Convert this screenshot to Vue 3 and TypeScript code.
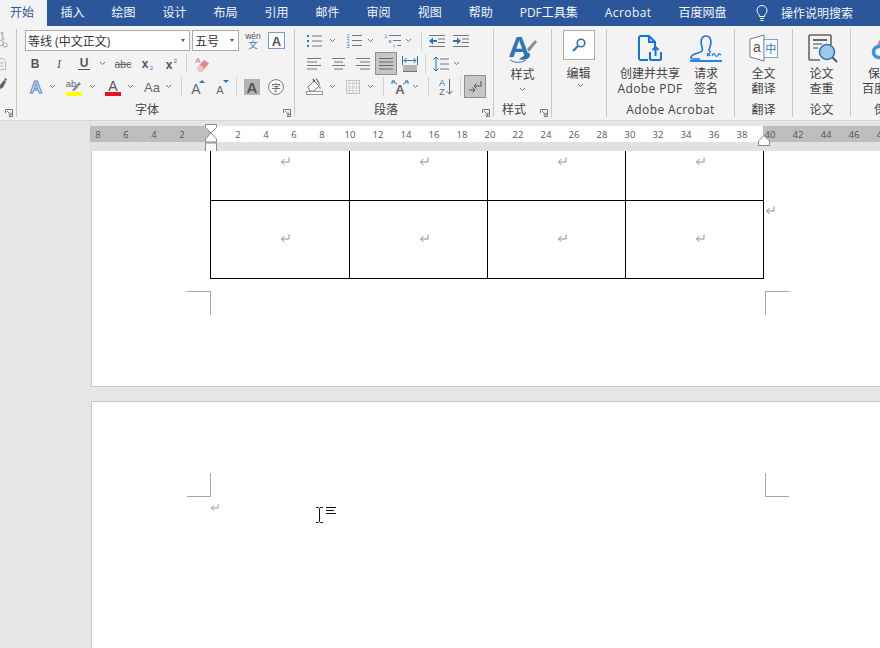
<script setup lang="ts">
const tabs = ['插入', '绘图', '设计', '布局', '引用', '邮件', '审阅', '视图', '帮助', 'PDF工具集', 'Acrobat', '百度网盘'];
const leftNums = [8, 6, 4, 2];
const midNums = Array.from({ length: 19 }, (_, i) => (i + 1) * 2);
const rightNums = [40, 42, 44, 46, 48];
</script>

<template>
  <div class="word">
    <nav class="tabs">
      <span class="tab active">开始</span>
      <span v-for="t in tabs" :key="t" class="tab" :class="{ latin: t === 'Acrobat' }">{{ t }}</span>
      <svg class="bulb" width="14" height="16" viewBox="0 0 14 16" fill="none" stroke="#fff" stroke-width="1">
        <path d="M4.5 11.5C4.5 9 2 8.500 2 5.500a5 5 0 0 1 10 0c0 3-2.500 3.500-2.500 6z" />
        <path d="M5 13.500h4M5.500 15.500h3" />
      </svg>
      <span class="search-tab">操作说明搜索</span>
    </nav>

    <section class="ribbon">
      <div class="group clip">
        <div class="clip-icons">
          <svg class="ic" width="7" height="16" viewBox="0 0 7 16" fill="none" stroke="#b5b5b5" stroke-width="1.200">
            <path d="M3 0l-1 8M1 0l3 8" /><circle cx="1" cy="11" r="2.500" /><circle cx="5" cy="13" r="2" />
          </svg>
          <svg class="ic" width="7" height="12" viewBox="0 0 7 12" fill="none" stroke="#bdbdbd">
            <path d="M0 .5h3l2.500 3v8H0" /><path d="M0 5h3.500M0 8h3.500" />
          </svg>
          <svg class="ic" width="7" height="11" viewBox="0 0 7 11" fill="#666">
            <path d="M0 7l4-5 2 1.500-3 6-3 1.500z" /><path d="M4 1l1.500-1L7 1.500 6 3z" />
          </svg>
        </div>
        <div class="label-row clip-label">
          <span></span><span></span>
          <svg class="launch" width="8" height="8" viewBox="0 0 8 8" fill="none" stroke="#777"><path d="M.5 4V.5h7v7H4M2 2l4 4M6 3.500V6H3.500" /></svg>
        </div>
      </div>

      <div class="group font">
        <div class="rb-row font-row1">
          <div class="combo family"><span>等线 (中文正文)</span><i class="caret"></i></div>
          <div class="combo size"><span>五号</span><i class="caret"></i></div>
          <svg class="ic wen" width="16" height="20" viewBox="0 0 16 20">
            <text x="8" y="8" text-anchor="middle" font-size="8.500" fill="#555">wén</text>
            <text x="8" y="17" text-anchor="middle" font-size="9" fill="#2f75b5" class="cjk">文</text>
          </svg>
          <svg class="ic" width="17" height="17" viewBox="0 0 17 17">
            <rect x=".5" y=".5" width="16" height="16" fill="#fff" stroke="#7b9cc2" />
            <text x="8.500" y="13.500" text-anchor="middle" font-size="13" font-weight="700" fill="#555">A</text>
          </svg>
        </div>

        <div class="rb-row font-row2">
          <svg class="ic" width="16" height="16" viewBox="0 0 16 16"><text x="8" y="12" text-anchor="middle" font-size="12" font-weight="700" fill="#555">B</text></svg>
          <svg class="ic" width="16" height="16" viewBox="0 0 16 16"><text x="8" y="12" text-anchor="middle" font-size="12" font-style="italic" fill="#555" class="serif">I</text></svg>
          <svg class="ic" width="16" height="16" viewBox="0 0 16 16"><text x="8" y="11" text-anchor="middle" font-size="12" font-weight="700" fill="#555">U</text><path d="M2 13.500h12" stroke="#555" /></svg>
          <svg class="chev" width="7" height="5" viewBox="0 0 7 5" fill="none" stroke="#777"><path d="M1 1l2.500 2.500L6 1" /></svg>
          <svg class="ic" width="18" height="16" viewBox="0 0 18 16"><text x="9" y="12" text-anchor="middle" font-size="10.500" fill="#666">abc</text><path d="M1 8.500h16" stroke="#666" /></svg>
          <svg class="ic" width="16" height="16" viewBox="0 0 16 16"><text x="6" y="12" text-anchor="middle" font-size="12" font-weight="700" fill="#555">x</text><text x="12.500" y="14" text-anchor="middle" font-size="6" fill="#2f75b5">2</text></svg>
          <svg class="ic" width="16" height="16" viewBox="0 0 16 16"><text x="6" y="13" text-anchor="middle" font-size="12" font-weight="700" fill="#555">x</text><text x="12.500" y="6.500" text-anchor="middle" font-size="6" fill="#555">2</text></svg>
          <i class="vsep"></i>
          <svg class="ic" width="16" height="16" viewBox="0 0 16 16">
            <text x="4" y="7" font-size="8" text-anchor="middle" fill="#888">A</text>
            <path d="M3 12l7-8 5 3.500-7 8H5z" fill="#e8848c" /><path d="M3 12l3-3 4 3-2.500 3.500H5z" fill="#f4c5c8" />
          </svg>
        </div>

        <div class="rb-row font-row3">
          <svg class="ic" width="16" height="18" viewBox="0 0 16 18"><text x="8" y="15" text-anchor="middle" font-size="17" font-weight="700" fill="#dbe8f6" stroke="#4f86c6" stroke-width=".9">A</text></svg>
          <svg class="chev" width="7" height="5" viewBox="0 0 7 5" fill="none" stroke="#777"><path d="M1 1l2.500 2.500L6 1" /></svg>
          <svg class="ic" width="16" height="18" viewBox="0 0 16 18">
            <text x="5" y="9" text-anchor="middle" font-size="9.500" fill="#666">ab</text>
            <path d="M7 11l6-7 2 1.500-6 7-3 .5z" fill="#8c8c8c" /><rect y="14" width="16" height="4" fill="#ffff00" />
          </svg>
          <svg class="chev" width="7" height="5" viewBox="0 0 7 5" fill="none" stroke="#777"><path d="M1 1l2.500 2.500L6 1" /></svg>
          <svg class="ic" width="16" height="18" viewBox="0 0 16 18"><text x="8" y="13" text-anchor="middle" font-size="14" fill="#555">A</text><rect y="14" width="16" height="4" fill="#e81123" /></svg>
          <svg class="chev" width="7" height="5" viewBox="0 0 7 5" fill="none" stroke="#777"><path d="M1 1l2.500 2.500L6 1" /></svg>
          <svg class="ic" width="16" height="16" viewBox="0 0 16 16"><text x="8" y="13" text-anchor="middle" font-size="13" fill="#666">Aa</text></svg>
          <svg class="chev" width="7" height="5" viewBox="0 0 7 5" fill="none" stroke="#777"><path d="M1 1l2.500 2.500L6 1" /></svg>
          <i class="vsep"></i>
          <svg class="ic" width="16" height="18" viewBox="0 0 16 18"><text x="6" y="16" text-anchor="middle" font-size="14" fill="#666">A</text><path d="M9 5l3-3 3 3z" fill="#2f75b5" /></svg>
          <svg class="ic" width="16" height="18" viewBox="0 0 16 18"><text x="6" y="16" text-anchor="middle" font-size="11" fill="#666">A</text><path d="M9 2l3 3 3-3z" fill="#2f75b5" /></svg>
          <i class="vsep"></i>
          <svg class="ic" width="16" height="16" viewBox="0 0 16 16"><rect width="16" height="16" fill="#b4b4b4" /><text x="8" y="13.500" text-anchor="middle" font-size="15" font-weight="700" fill="#555">A</text></svg>
          <svg class="ic" width="16" height="16" viewBox="0 0 16 16"><circle cx="8" cy="8" r="7.400" fill="#fff" stroke="#777" /><text x="8" y="11.500" text-anchor="middle" font-size="9.500" fill="#555" class="cjk">字</text></svg>
        </div>

        <div class="label-row font-label">
          <span></span><span class="glabel">字体</span>
          <svg class="launch" width="8" height="8" viewBox="0 0 8 8" fill="none" stroke="#777"><path d="M.5 4V.5h7v7H4M2 2l4 4M6 3.500V6H3.500" /></svg>
        </div>
      </div>

      <div class="group para">
        <div class="rb-row para-row1">
          <svg class="ic" width="16" height="14" viewBox="0 0 16 14"><path d="M1 2h2M1 7h2M1 12h2" stroke="#2f75b5" stroke-width="2" /><path d="M6 2h10M6 7h10M6 12h10" stroke="#777" /></svg>
          <svg class="chev" width="7" height="5" viewBox="0 0 7 5" fill="none" stroke="#777"><path d="M1 1l2.500 2.500L6 1" /></svg>
          <svg class="ic" width="16" height="15" viewBox="0 0 16 15"><text x="2" y="5" font-size="5.500" text-anchor="middle" fill="#2f75b5">1</text><text x="2" y="10" font-size="5.500" text-anchor="middle" fill="#2f75b5">2</text><text x="2" y="15" font-size="5.500" text-anchor="middle" fill="#2f75b5">3</text><path d="M6 2.500h10M6 7.500h10M6 12.500h10" stroke="#777" /></svg>
          <svg class="chev" width="7" height="5" viewBox="0 0 7 5" fill="none" stroke="#777"><path d="M1 1l2.500 2.500L6 1" /></svg>
          <svg class="ic" width="17" height="15" viewBox="0 0 17 15"><text x="2" y="5" font-size="5" text-anchor="middle" fill="#2f75b5">1</text><text x="6" y="10" font-size="5" text-anchor="middle" fill="#2f75b5">a</text><text x="10" y="15" font-size="5" text-anchor="middle" fill="#2f75b5">i</text><path d="M5 2.500h12M9 7.500h8M13 12.500h4" stroke="#777" /></svg>
          <svg class="chev" width="7" height="5" viewBox="0 0 7 5" fill="none" stroke="#777"><path d="M1 1l2.500 2.500L6 1" /></svg>
          <i class="vsep"></i>
          <svg class="ic" width="16" height="14" viewBox="0 0 16 14"><path d="M0 1.500h16M9 5h7M9 8.500h7M0 12.500h16" stroke="#777" /><path d="M0 7l4-3.500V6h4v2H4v2.500z" fill="#2f75b5" /></svg>
          <svg class="ic" width="16" height="14" viewBox="0 0 16 14"><path d="M0 1.500h16M9 5h7M9 8.500h7M0 12.500h16" stroke="#777" /><path d="M8 7L4 3.500V6H0v2h4v2.500z" fill="#2f75b5" /></svg>
        </div>

        <div class="rb-row para-row2">
          <svg class="ic" width="16" height="13" viewBox="0 0 16 13"><path d="M1 1.500h14M1 5h10M1 8.500h14M1 12h10" stroke="#777" /></svg>
          <svg class="ic" width="15" height="13" viewBox="0 0 15 13"><path d="M1 1.500h13M3 5h9M1 8.500h13M3 12h9" stroke="#777" /></svg>
          <svg class="ic" width="15" height="13" viewBox="0 0 15 13"><path d="M1 1.500h14M5 5h10M1 8.500h14M5 12h10" stroke="#777" /></svg>
          <span class="toggled"><svg width="16" height="13" viewBox="0 0 16 13"><path d="M1 1.500h14M1 5h14M1 8.500h14M1 12h14" stroke="#666" /></svg></span>
          <svg class="ic" width="16" height="16" viewBox="0 0 16 16"><path d="M.5 0v9M15.500 0v9" stroke="#2f75b5" /><path d="M2 4.500h12M2 4.500l2.500-2.500M2 4.500l2.500 2.500M14 4.500L11.500 2M14 4.500L11.500 7" fill="none" stroke="#2f75b5" /><path d="M1 10h14M1 12h14M1 14h14M1 15.500h14" stroke="#777" /></svg>
          <i class="vsep"></i>
          <svg class="ic" width="16" height="16" viewBox="0 0 16 16"><path d="M3 1v14M.5 3.500L3 1l2.500 2.500M.5 12.500L3 15l2.500-2.500" fill="none" stroke="#2f75b5" /><path d="M7 3h9M7 8h9M7 13h9" stroke="#777" /></svg>
          <svg class="chev" width="7" height="5" viewBox="0 0 7 5" fill="none" stroke="#777"><path d="M1 1l2.500 2.500L6 1" /></svg>
        </div>

        <div class="rb-row para-row3">
          <svg class="ic" width="17" height="17" viewBox="0 0 17 17"><path d="M2 9l6-6 5 5-5 5H4z" fill="#fff" stroke="#777" /><path d="M7 1l2 2-1 1z" stroke="#555" /><path d="M9 0c3 1 5 4 5 8l1 3-2-1 1-2z" fill="#777" /><rect x=".5" y="13.500" width="16" height="3" fill="#fff" stroke="#999" /></svg>
          <svg class="chev" width="7" height="5" viewBox="0 0 7 5" fill="none" stroke="#777"><path d="M1 1l2.500 2.500L6 1" /></svg>
          <svg class="ic" width="14" height="14" viewBox="0 0 14 14"><rect x=".5" y=".5" width="13" height="13" fill="none" stroke="#999" stroke-dasharray="1 1" /><path d="M7 0v14M0 7h14M3.500 0v14M10.500 0v14M0 3.500h14M0 10.500h14" stroke="#bbb" stroke-dasharray="1 1" /></svg>
          <svg class="chev" width="7" height="5" viewBox="0 0 7 5" fill="none" stroke="#777"><path d="M1 1l2.500 2.500L6 1" /></svg>
          <i class="vsep"></i>
          <svg class="ic" width="18" height="14" viewBox="0 0 18 14"><text x="9" y="13.500" text-anchor="middle" font-size="13" font-weight="700" fill="#666">A</text><path d="M1 1l5 3M1 1v3M1 1h3M17 1l-5 3M17 1v3M17 1h-3" fill="none" stroke="#2f75b5" /></svg>
          <svg class="chev" width="7" height="5" viewBox="0 0 7 5" fill="none" stroke="#777"><path d="M1 1l2.500 2.500L6 1" /></svg>
          <i class="vsep"></i>
          <svg class="ic" width="16" height="18" viewBox="0 0 16 18"><text x="5" y="8" text-anchor="middle" font-size="9" fill="#2f75b5">A</text><text x="5" y="17" text-anchor="middle" font-size="9" fill="#666">Z</text><path d="M12.500 1v15M9.500 13l3 3 3-3" fill="none" stroke="#666" /></svg>
          <i class="vsep"></i>
          <span class="toggled tall"><svg width="14" height="14" viewBox="0 0 14 14" fill="none" stroke="#555"><path d="M13 1v5H6M6 6l2.500-2.500M6 6l2.500 2.500" /><path d="M1 10h6M7 10l-2.500-2.500M7 10l-2.500 2.500" /></svg></span>
        </div>

        <div class="label-row para-label">
          <span></span><span class="glabel">段落</span>
          <svg class="launch" width="8" height="8" viewBox="0 0 8 8" fill="none" stroke="#777"><path d="M.5 4V.5h7v7H4M2 2l4 4M6 3.500V6H3.500" /></svg>
        </div>
      </div>

      <div class="group styles">
        <div class="big">
          <svg class="big-ic" width="30" height="31" viewBox="0 0 30 31">
            <text x="11" y="24" text-anchor="middle" font-size="30" font-weight="700" fill="#2f75b5">A</text>
            <path d="M19 16L27 7l2 2-8 10z" fill="#8c8c8c" />
            <path d="M14 24c3-1 4-5 7-4 2 1 1 5-2 6-2 1-7 1-8 0z" fill="#2f75b5" />
            <path d="M2 27c4 3 12 3 16 0" stroke="#2f75b5" fill="none" />
          </svg>
          <span class="big-text">样式</span>
          <svg class="chev" width="7" height="5" viewBox="0 0 7 5" fill="none" stroke="#777"><path d="M1 1l2.500 2.500L6 1" /></svg>
        </div>
        <div class="label-row styles-label">
          <span></span><span class="glabel">样式</span>
          <svg class="launch" width="8" height="8" viewBox="0 0 8 8" fill="none" stroke="#777"><path d="M.5 4V.5h7v7H4M2 2l4 4M6 3.500V6H3.500" /></svg>
        </div>
      </div>

      <div class="group edit">
        <div class="edit-box">
          <svg width="14" height="14" viewBox="0 0 14 14" fill="none" stroke="#2f6fb0" stroke-width="1.600"><circle cx="9" cy="5" r="3.800" /><path d="M6 8l-5 5" stroke-width="2.200" /></svg>
        </div>
        <span class="big-text">编辑</span>
        <svg class="chev edit-chev" width="7" height="5" viewBox="0 0 7 5" fill="none" stroke="#777"><path d="M1 1l2.500 2.500L6 1" /></svg>
      </div>

      <div class="group acrobat">
        <div class="acro-btns">
          <div class="big share">
            <svg class="big-ic" width="25" height="27" viewBox="0 0 25 27" fill="none" stroke="#1473e6" stroke-width="2">
              <path d="M10 25H3a2 2 0 0 1-2-2V3a2 2 0 0 1 2-2h8l6 6v5" />
              <path d="M11 1v6h6" />
              <path d="M12 17v7a2 2 0 0 0 1 1h9a2 2 0 0 0 1-1v-7" />
              <path d="M17.500 21v-9M14.500 15l3-3 3 3" />
            </svg>
            <span class="big-text two">创建并共享<br /><span class="latin">Adobe PDF</span></span>
          </div>
          <div class="big sign">
            <svg class="big-ic" width="32" height="28" viewBox="0 0 32 28" fill="none" stroke="#1473e6" stroke-width="1.600">
              <path d="M8 19c5-1 5-3 4-6-2-5-1-11 4-11s6 6 4 11c-1 3-2 4 1 5" />
              <path d="M8 19c-5 1-7 3-7 5 0 1 1 1 3 1h6" />
              <path d="M17 19l3 3M20 19l-3 3" stroke-width="1.200" />
              <path d="M22 22c1-3 2-3 3-1s2 2 3 0 2-1 3 0" stroke-width="1.200" />
              <path d="M0 27h32" stroke-width="1.800" stroke="#1473e6" />
            </svg>
            <span class="big-text two">请求<br />签名</span>
          </div>
        </div>
        <div class="label-row center-label"><span class="glabel latin">Adobe Acrobat</span></div>
      </div>

      <div class="group trans">
        <div class="big">
          <svg class="big-ic" width="29" height="28" viewBox="0 0 29 28" fill="none">
            <path d="M1 5l14-4v26L1 23z" fill="#fff" stroke="#777" />
            <text x="8" y="18" text-anchor="middle" font-size="14" fill="#555" stroke="none">a</text>
            <rect x="15" y="5.500" width="13.500" height="18" fill="#fff" stroke="#7aa5d6" />
            <text x="21.700" y="19" text-anchor="middle" font-size="11" fill="#2f75b5" class="cjk">中</text>
          </svg>
          <span class="big-text two">全文<br />翻译</span>
        </div>
        <div class="label-row center-label"><span class="glabel">翻译</span></div>
      </div>

      <div class="group paper">
        <div class="big">
          <svg class="big-ic" width="30" height="29" viewBox="0 0 30 29" fill="none">
            <path d="M12 26H2a1 1 0 0 1-1-1V2a1 1 0 0 1 1-1h20a1 1 0 0 1 1 1v9" stroke="#666" stroke-width="1.600" />
            <path d="M5 6h14" stroke="#666" stroke-width="2" /><path d="M5 10h9M5 14h5" stroke="#999" stroke-width="2" />
            <circle cx="19" cy="18" r="7.500" fill="#9cc8ec" stroke="#2f75b5" stroke-width="1.600" />
            <path d="M24.500 23.500l4.500 4.500" stroke="#555" stroke-width="2" />
          </svg>
          <span class="big-text two">论文<br />查重</span>
        </div>
        <div class="label-row center-label"><span class="glabel">论文</span></div>
      </div>

      <div class="group save">
        <div class="big">
          <svg class="big-ic" width="32" height="28" viewBox="0 0 32 28" fill="none">
            <circle cx="9" cy="18" r="5.500" stroke="#3a95d8" stroke-width="3.500" />
            <path d="M9 11c1-5 6-8 10-6" stroke="#e8727e" stroke-width="3" />
          </svg>
          <span class="big-text two">保存到<br />百度网盘</span>
        </div>
        <div class="label-row center-label"><span class="glabel">保存</span></div>
      </div>
    </section>

    <div class="ruler-band">
      <div class="ruler">
        <div class="ruler-seg off left"><span v-for="n in leftNums" :key="n" class="num">{{ n }}</span></div>
        <div class="ruler-seg on"><span v-for="n in midNums" :key="n" class="num">{{ n }}</span></div>
        <div class="ruler-seg off right"><span v-for="n in rightNums" :key="n" class="num">{{ n }}</span></div>
      </div>
      <svg class="indent-left" width="12" height="28" viewBox="0 0 12 28" fill="#fff" stroke="#8a8a8a">
        <path d="M.5.500h11v3L6 9 .5 3.500z" />
        <path d="M6 9l5.500 6v3H.5v-3z" />
        <rect x=".5" y="19" width="11" height="8.500" />
      </svg>
      <svg class="indent-right" width="12" height="11" viewBox="0 0 12 11" fill="#fff" stroke="#8a8a8a">
        <path d="M6 .5l5.500 5.500v4.500H.5V6z" />
      </svg>
    </div>

    <main class="doc">
      <div class="page first">
        <div class="table-wrap">
          <table class="grid">
            <tbody>
              <tr class="r1">
                <td v-for="i in 4" :key="i"><svg class="ret" width="10" height="9" viewBox="0 0 10 9" fill="none" stroke="#8e8e8e"><path d="M9 .5v4.500H1.500M1.500 5l3-3M1.500 5l3 3" /></svg></td>
              </tr>
              <tr class="r2">
                <td v-for="i in 4" :key="i"><svg class="ret" width="10" height="9" viewBox="0 0 10 9" fill="none" stroke="#8e8e8e"><path d="M9 .5v4.500H1.500M1.500 5l3-3M1.500 5l3 3" /></svg></td>
              </tr>
            </tbody>
          </table>
          <svg class="row-end" width="10" height="9" viewBox="0 0 10 9" fill="none" stroke="#8e8e8e"><path d="M9 .5v4.500H1.500M1.500 5l3-3M1.500 5l3 3" /></svg>
        </div>
        <div class="crops top-crops">
          <i class="crop tl"></i>
          <i class="crop tr"></i>
        </div>
      </div>

      <div class="page second">
        <div class="crops bottom-crops">
          <i class="crop bl"></i>
          <i class="crop br"></i>
        </div>
        <div class="first-line">
          <svg class="para-mark" width="9" height="9" viewBox="0 0 10 9" fill="none" stroke="#8e8e8e"><path d="M9 .5v4.500H1.500M1.500 5l3-3M1.500 5l3 3" /></svg>
          <svg class="ibeam" width="9" height="16" viewBox="0 0 9 16" fill="none" stroke="#111"><path d="M1 .5h2.500l1 1 1-1H8M4.500 1.500v13M1 15.500h2.500l1-1 1 1H8" /></svg>
          <svg class="lines" width="10" height="7" viewBox="0 0 10 7" fill="none" stroke="#111"><path d="M0 .5h10M0 3.500h8M0 6.500h10" /></svg>
        </div>
      </div>
    </main>
  </div>
</template>

<style scoped>
.word {
  width: 880px;
  height: 648px;
  overflow: hidden;
  background: #e6e6e6;
  color: #444;
  font-family: "Open Sans", "Noto Sans CJK SC", sans-serif;
  font-size: 12px;
}

svg {
  overflow: visible;
}

svg text {
  font-family: "Liberation Sans", sans-serif;
}

svg text.serif {
  font-family: "Liberation Serif", serif;
}

svg text.cjk {
  font-family: "Noto Sans CJK SC", sans-serif;
}

.latin {
  letter-spacing: 0.42px;
}

.tabs {
  display: flex;
  align-items: center;
  height: 26px;
  background: #2b579a;
  color: #f2f5fa;
  white-space: nowrap;
}

.tab {
  padding: 0 13.5px;
  line-height: 20px;
}

.tab:first-child {
  padding: 3px 13px 3px 10px;
  background: #f3f3f3;
  color: #2b579a;
}

.bulb {
  margin-left: 15px;
}

.search-tab {
  margin-left: 12px;
}

.ribbon {
  display: flex;
  height: 95px;
  padding-top: 3px;
  box-sizing: border-box;
  background: #f3f3f3;
  border-bottom: 1px solid #d6d6d6;
  overflow: hidden;
}

.group {
  display: flex;
  flex-direction: column;
  flex: none;
  box-sizing: border-box;
  height: 88px;
  border-right: 1px solid #c9c9c9;
}

.clip { width: 17px; }
.font { width: 278px; }
.para { width: 199px; }
.styles { width: 58px; }
.edit { width: 55px; align-items: center; }
.acrobat { width: 128px; }
.trans { width: 58px; }
.paper { width: 58px; }
.save { width: 70px; border-right: none; }

.clip-icons {
  display: flex;
  flex-direction: column;
  gap: 10px;
  padding-top: 3px;
}

.clip-icons .ic:nth-child(3) {
  margin-top: -2px;
}

.ic { display: block; }

.chev { display: block; }

.rb-row {
  display: grid;
  align-items: center;
  justify-items: start;
  height: 23px;
}

.font-row1 {
  grid-template-columns: 167px 53px 23px auto;
  padding-left: 8px;
}

.font-row2 {
  grid-template-columns: 24px 25px 23px 15px 25px 24px 23px 8px auto;
  padding-left: 10px;
}

.font-row3 {
  grid-template-columns: 21px 17px 23px 16px 22px 17px 21px 16px 9px 24px 22px 8px 24px auto;
  padding-left: 11px;
}

.para-row1 {
  grid-template-columns: 23px 17px 21px 17px 21px 16px 8px 24px auto;
  padding-left: 11px;
}

.para-row2 {
  grid-template-columns: 25px 24px 20px 27px 23px 8px 20px auto;
  padding-left: 11px;
}

.para-row3 {
  grid-template-columns: 23px 17px 21px 16px 8px 21px 16px 9px 23px 4px auto;
  padding-left: 11px;
}

.vsep {
  display: block;
  width: 1px;
  height: 19px;
  background: #d2d2d2;
}

.combo {
  display: flex;
  align-items: center;
  justify-content: space-between;
  box-sizing: border-box;
  height: 21px;
  padding: 0 4px 0 2px;
  background: #fff;
  border: 1px solid #ababab;
  color: #333;
  white-space: nowrap;
}

.family { width: 165px; }
.size { width: 47px; }

.caret {
  width: 0;
  height: 0;
  border-left: 2.5px solid transparent;
  border-right: 2.5px solid transparent;
  border-top: 3px solid #555;
}

.toggled {
  display: flex;
  align-items: center;
  justify-content: center;
  box-sizing: border-box;
  width: 22px;
  height: 23px;
  background: #c6c6c6;
  border: 1px solid #8f8f8f;
}

.label-row {
  display: grid;
  align-items: center;
  height: 14px;
  margin-top: auto;
  line-height: 14px;
  white-space: nowrap;
}

.clip-label { grid-template-columns: 5px 0 auto; }
.font-label { grid-template-columns: 118px 24px 1fr; }
.para-label { grid-template-columns: 79px 24px 1fr; }
.styles-label { grid-template-columns: 8px 24px 1fr; }
.center-label { justify-items: center; }

.launch {
  display: block;
  justify-self: end;
  margin-top: 6px;
  margin-right: 3px;
}

.clip-label .launch {
  justify-self: start;
  margin-right: 0;
}

.big {
  display: flex;
  flex-direction: column;
  align-items: center;
}

.big-ic {
  display: block;
  flex: none;
}

.styles .big-ic { margin-top: 4px; }

.big-text {
  margin-top: 3px;
  line-height: 15px;
  text-align: center;
  white-space: nowrap;
}

.big-text.two {
  line-height: 14.5px;
}

.styles .chev {
  margin-top: 5px;
}

.edit-box {
  display: flex;
  align-items: center;
  justify-content: center;
  box-sizing: border-box;
  width: 32px;
  height: 30px;
  margin-top: 1px;
  margin-right: 1px;
  background: #fff;
  border: 1px solid #ababab;
}

.edit .big-text {
  margin-top: 6px;
  margin-right: 1px;
}

.edit-chev {
  margin-top: 2px;
  margin-left: 3px;
}

.acro-btns {
  display: flex;
  padding-left: 8px;
}

.share { width: 70px; }
.sign { width: 42px; }

.share .big-ic { margin-top: 6px; }
.sign .big-ic { margin-top: 5px; }
.share .big-text { margin-top: 5px; }
.sign .big-text { margin-top: 5px; }

.trans .big-ic { margin-top: 5px; }
.trans .big-text { margin-top: 5px; }
.paper .big-ic { margin-top: 5px; margin-left: 2px; }
.paper .big-text { margin-top: 4px; }

.save .big-ic { margin-top: 5px; }
.save .big-text { margin-top: 5px; }

.ruler-band {
  position: relative;
  height: 30px;
  padding-top: 5px;
  box-sizing: border-box;
  overflow: hidden;
}

.ruler {
  display: flex;
  align-items: flex-start;
  height: 25px;
  margin-left: 90px;
  background: #e1e1e1;
}

.ruler-seg {
  display: flex;
  align-items: center;
  flex: none;
  gap: 12px;
  height: 16px;
  color: #555;
  font-family: "Open Sans", sans-serif;
  font-size: 9.5px;
}

.off { background: #bdbdbd; }
.on { background: #fff; width: 553px; padding-left: 20px; box-sizing: border-box; }
.off.left { width: 120px; }
.off.right { flex: 1; gap: 14px; }

.num {
  flex: none;
  width: 16px;
  text-align: center;
}

.right .num { width: 14px; }

.indent-left {
  position: absolute;
  left: 205px;
  top: 3px;
}

.indent-right {
  position: absolute;
  left: 758px;
  top: 14px;
}

.doc {
  height: 497px;
  padding-left: 91px;
  overflow: hidden;
}

.page {
  background: #fff;
  border-left: 1px solid #c6c6c6;
}

.first {
  height: 235px;
  border-bottom: 1px solid #c6c6c6;
}

.second {
  height: 300px;
  margin-top: 14px;
  padding-top: 71px;
  border-top: 1px solid #c6c6c6;
}

.table-wrap {
  display: flex;
  align-items: flex-start;
  padding-left: 118px;
}

.grid {
  border-collapse: collapse;
  table-layout: fixed;
  width: 554px;
}

.grid td {
  width: 138px;
  padding: 0;
  border: 1px solid #000;
  border-top: none;
  text-align: center;
  vertical-align: top;
}

.grid td:first-child {
  width: 139px;
}

.r1 td { height: 49px; padding-top: 6px; box-sizing: border-box; }
.r2 td { height: 78px; padding-top: 33px; box-sizing: border-box; border-top: 1px solid #000; }

.ret {
  display: block;
  margin-left: 69px;
}

.row-end {
  flex: none;
  margin-top: 55px;
  margin-left: 1px;
}

.crops {
  display: flex;
  padding-left: 95px;
}

.top-crops { margin-top: 12px; }

.crop {
  display: block;
  box-sizing: border-box;
  width: 24px;
  height: 24px;
}

.tl { border-top: 1px solid #a8a8a8; border-right: 1px solid #a8a8a8; }
.tr { margin-left: 554px; border-top: 1px solid #a8a8a8; border-left: 1px solid #a8a8a8; }
.bl { border-bottom: 1px solid #a8a8a8; border-right: 1px solid #a8a8a8; }
.br { margin-left: 554px; border-bottom: 1px solid #a8a8a8; border-left: 1px solid #a8a8a8; }

.first-line {
  display: flex;
  align-items: flex-start;
  padding: 6px 0 0 118px;
}

.ibeam {
  margin-left: 96px;
  margin-top: 4px;
}

.lines {
  margin-left: 2px;
  margin-top: 4px;
}
</style>
